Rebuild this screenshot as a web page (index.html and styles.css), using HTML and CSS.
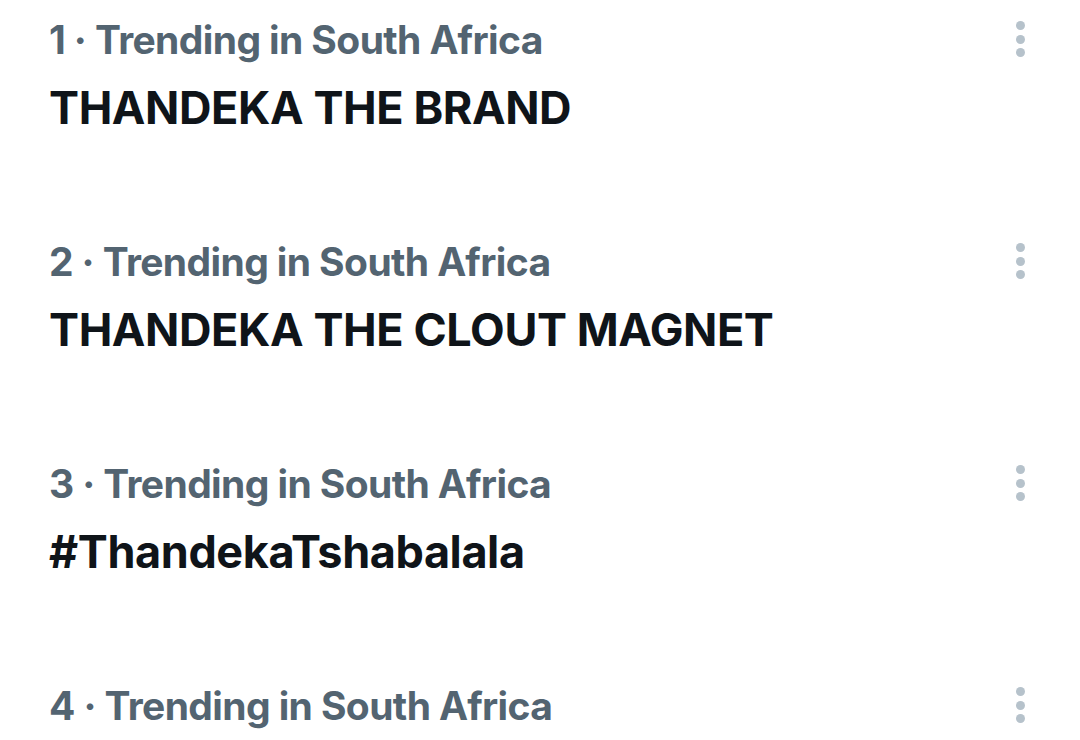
FILE: index.html
```html
<!DOCTYPE html>
<html>
<head>
<meta charset="utf-8">
<link rel="stylesheet" href="styles.css">
</head>
<body>
<div class="list">
  <div class="item">
    <div class="text">
      <div class="meta">1 · Trending in South Africa</div>
      <div class="title">THANDEKA THE BRAND</div>
    </div>
    <div class="more"><span></span><span></span><span></span></div>
  </div>
  <div class="item">
    <div class="text">
      <div class="meta">2 · Trending in South Africa</div>
      <div class="title">THANDEKA THE CLOUT MAGNET</div>
    </div>
    <div class="more"><span></span><span></span><span></span></div>
  </div>
  <div class="item">
    <div class="text">
      <div class="meta">3 · Trending in South Africa</div>
      <div class="title">#ThandekaTshabalala</div>
    </div>
    <div class="more"><span></span><span></span><span></span></div>
  </div>
  <div class="item last">
    <div class="text">
      <div class="meta">4 · Trending in South Africa</div>
    </div>
    <div class="more"><span></span><span></span><span></span></div>
  </div>
</div>
</body>
</html>
```
FILE: styles.css
```css
html, body {
  margin: 0;
  padding: 0;
  background: #ffffff;
}
body {
  width: 1080px;
  height: 740px;
  overflow: hidden;
  font-family: Inter, "Liberation Sans", sans-serif;
}
.list {
  display: flex;
  flex-direction: column;
}
.item {
  display: flex;
  justify-content: space-between;
  align-items: flex-start;
  height: 222px;
  padding: 16px 55px 0 49px;
  box-sizing: border-box;
}
.item.last {
  height: 72px;
}
.text {
  display: flex;
  flex-direction: column;
  gap: 18px;
}
.meta {
  font-size: 39px;
  line-height: 48px;
  font-weight: 650;
  color: #536471;
  letter-spacing: -0.6px;
}
.title {
  font-size: 45px;
  line-height: 52px;
  font-weight: 700;
  color: #0f1419;
  letter-spacing: -0.4px;
}
.more {
  display: flex;
  flex-direction: column;
  align-items: center;
  gap: 4.5px;
  padding-top: 5px;
}
.more span {
  width: 9px;
  height: 9px;
  border-radius: 50%;
  background: #b6c2cb;
}
```
